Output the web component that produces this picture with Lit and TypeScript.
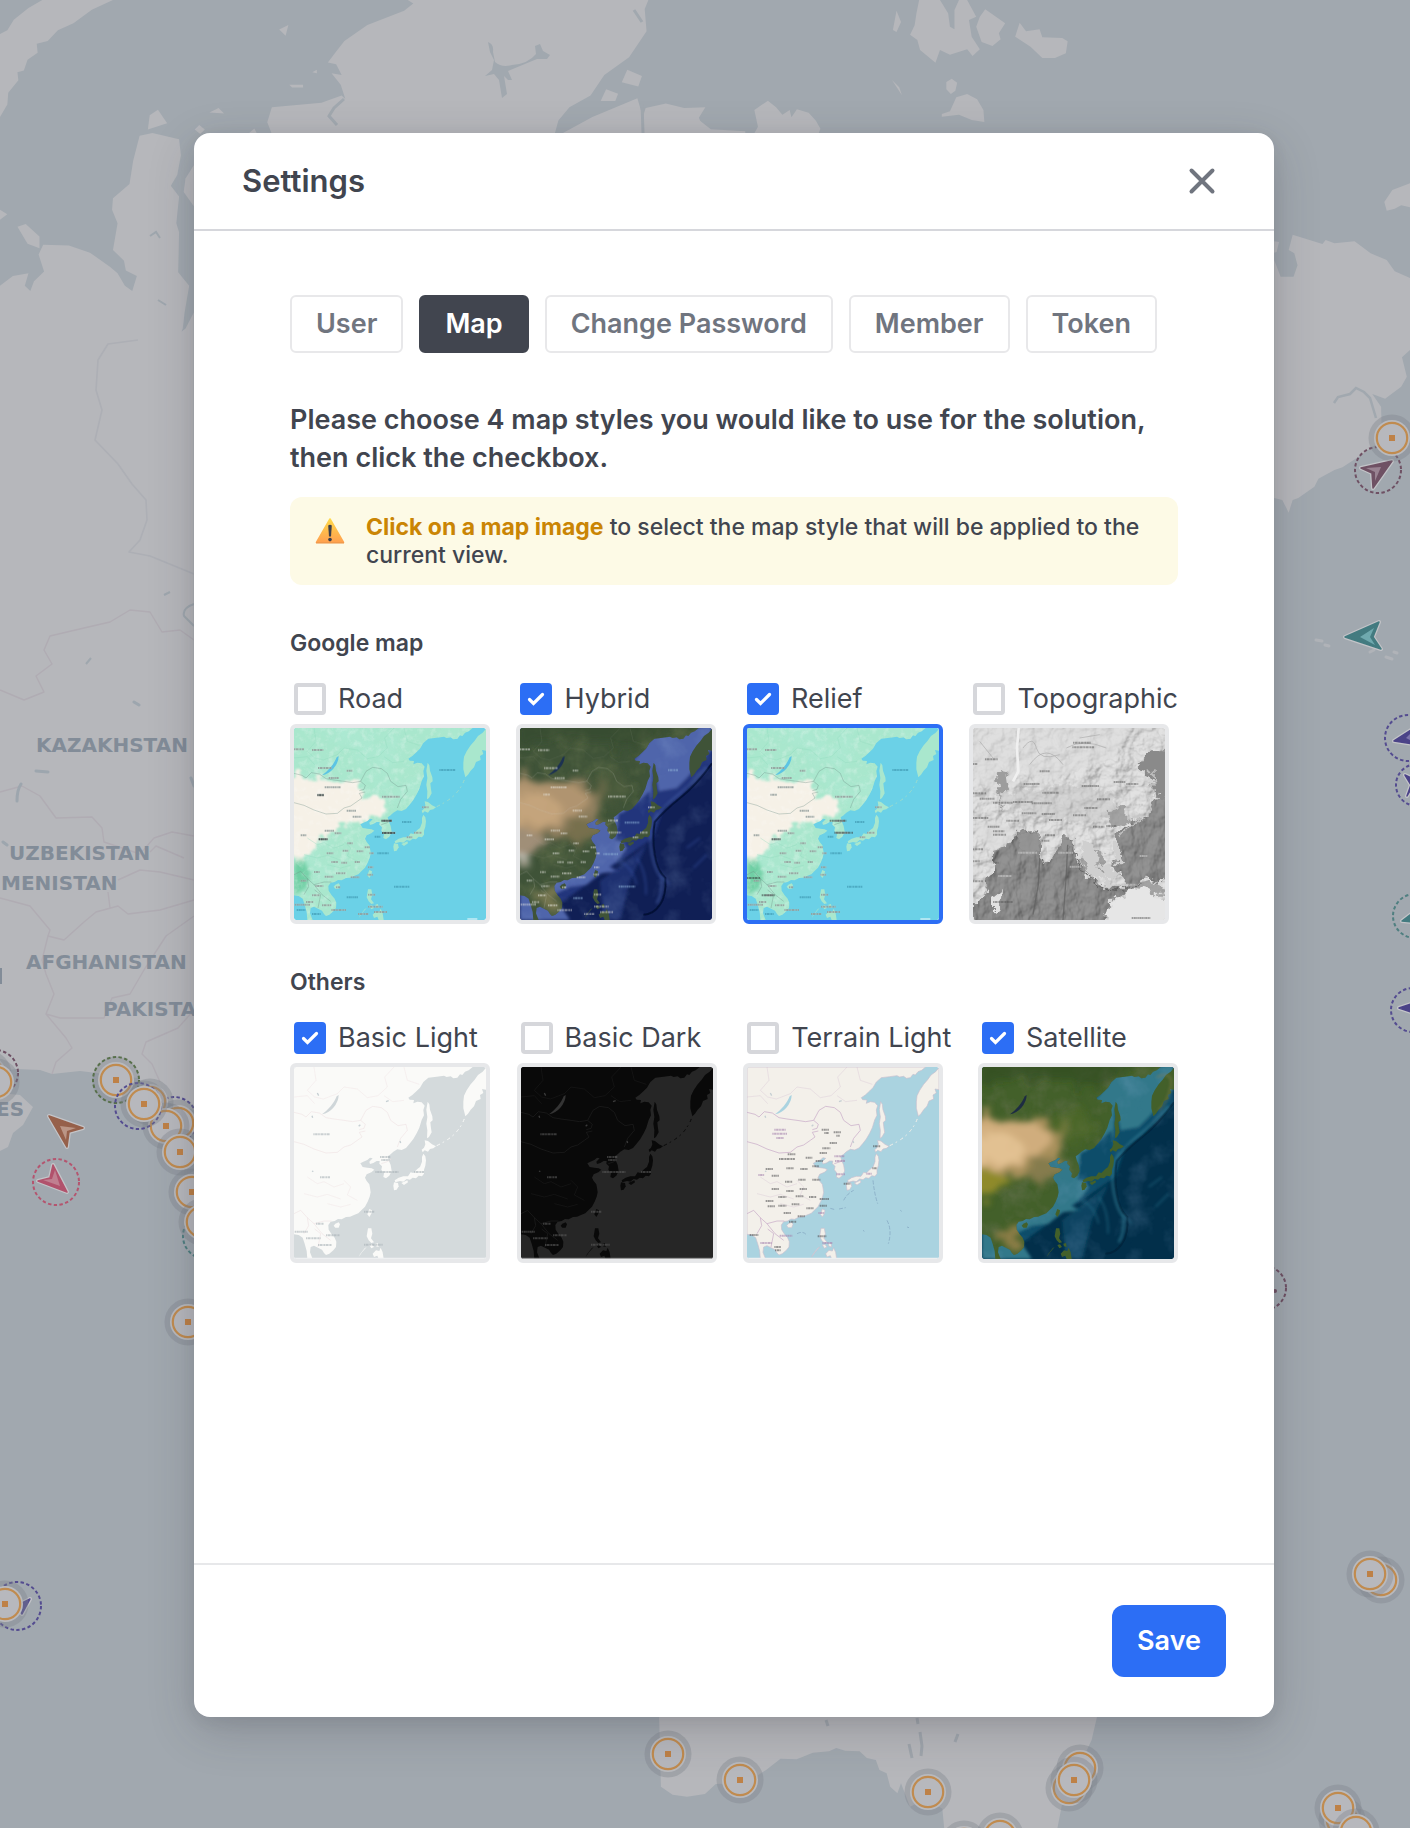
import { LitElement, html, svg, css, nothing } from "lit";
import { customElement, property, state } from "lit/decorators.js";
import { classMap } from "lit/directives/class-map.js";

type StyleId = "road" | "hybrid" | "relief" | "topographic" | "light" | "dark" | "terrain" | "satellite";

interface MapStyle {
  id: StyleId;
  label: string;
}

const GOOGLE: MapStyle[] = [
  { id: "road", label: "Road" },
  { id: "hybrid", label: "Hybrid" },
  { id: "relief", label: "Relief" },
  { id: "topographic", label: "Topographic" },
];

const OTHERS: MapStyle[] = [
  { id: "light", label: "Basic Light" },
  { id: "dark", label: "Basic Dark" },
  { id: "terrain", label: "Terrain Light" },
  { id: "satellite", label: "Satellite" },
];

const TABS = ["User", "Map", "Change Password", "Member", "Token"];

/* East Asia outline on a 576 x 576 tile. */
const MAINLAND =
  "M0 0H536L524 10 513 14 505 24 498 22 490 32 478 34 470 28 458 30 450 26 428 29 403 32 388 45 378 62 368 72 355 84 343 92 347 98 360 99 358 109 370 104 383 106 392 116 388 129 390 145 383 159 376 182 368 199 358 216 348 229 336 243 323 249 310 247 298 254 290 262 281 268 284 280 290 294 293 312 286 326 276 334 268 330 270 319 262 308 264 298 256 290 257 282 248 282 238 288 228 291 226 284 236 274 228 272 220 279 208 284 199 289 206 300 220 302 233 304 241 308 232 316 218 322 213 332 218 342 226 352 228 362 230 376 227 389 221 404 213 419 202 430 193 439 180 444 168 449 156 450 143 457 132 456 122 462 110 464 103 474 104 488 113 502 122 512 127 524 126 540 118 550 106 560 96 564 90 558 84 548 72 542 60 536 50 540 48 556 56 576H40L38 552 32 530 26 512 14 504 0 502Z";
const ISLANDS = [
  "M401 104L406 112 408 128 415 148 416 160 409 166 411 184 413 196 405 210 399 214 400 190 397 170 400 150 397 128Z",
  "M392 220L402 222 414 232 426 238 418 244 408 246 402 254 392 250 386 256 383 248 390 242 394 232Z",
  "M388 260L394 268 396 280 394 296 390 308 390 320 384 328 374 326 366 334 356 332 348 338 338 336 328 344 318 342 304 346 302 340 314 332 328 328 342 328 350 316 358 318 370 306 378 300 384 284 384 270Z",
  "M300 346L312 348 314 358 308 368 300 370 298 356Z",
  "M322 348L340 340 342 346 330 354Z",
  "M576 2L566 14 552 24 542 38 530 52 518 70 510 86 508 104 508 124 514 148 522 140 530 128 540 118 546 102 560 96 558 84 568 78 564 66 576 68Z",
  "M226 426L234 430 232 440 226 450 220 442Z",
  "M124 470L134 466 138 472 134 482 124 482 119 476Z",
  "M222 484L232 484 235 500 231 514 240 526 232 528 224 520 218 508Z",
  "M226 534L234 532 240 540 232 544ZM244 530L252 528 254 540 246 538Z",
  "M236 560L246 550 256 552 260 542 266 556 269 576H254L250 566 240 570Z",
  "M218 540L204 556 194 570 198 562 212 544Z",
];
const BAIKAL = "M134 84Q134 104 118 122 104 138 84 142 98 132 110 118 124 100 128 88Z";
const BORDERS =
  "M0 136L24 142 36 150 52 134 76 138 96 152 120 156 150 160 176 164 200 160 214 172 210 184 196 188M0 224L30 232 60 246 96 258 130 256 150 240 170 234 190 220 204 210 196 196 214 192M200 160L216 130 236 118 262 122 280 136 290 160 312 176 336 172 340 190 320 214 310 240M262 290L280 284 292 276M0 440L20 430 40 452 60 470 90 462 112 462M40 452L44 476 30 500M60 470L84 500 110 520M72 540L80 500 62 486";
const RIVERS =
  "M60 0L66 40 40 70 62 90 88 96 130 80 150 60 190 66 220 92 252 86 280 60 272 30 300 0M330 0L340 40 376 52M0 90L40 86 62 110M150 340L170 360 160 384 190 400M40 330L70 350 90 344 120 360 150 350M30 380L70 390 100 382 140 396M100 410L140 420 170 412M270 86L296 104 330 100";

/* Tiny place-name ticks: x, y, width. */
const TICKS: number[][] = [
  [0, 64, 30], [54, 66, 34], [72, 120, 42], [158, 128, 18], [104, 150, 30], [92, 178, 48], [70, 200, 20],
  [158, 248, 28], [264, 206, 54], [176, 266, 26], [264, 278, 30], [266, 314, 38], [384, 238, 20], [360, 314, 24],
  [338, 328, 18], [92, 308, 28], [20, 322, 18], [74, 334, 28], [122, 316, 20], [160, 346, 16], [98, 376, 20],
  [146, 368, 18], [188, 370, 20], [112, 402, 20], [142, 404, 18], [182, 402, 16], [212, 358, 16], [226, 376, 14],
  [60, 432, 18], [92, 446, 26], [126, 436, 28], [170, 448, 26], [222, 418, 16], [220, 440, 18], [126, 478, 14],
  [20, 458, 18], [64, 474, 24], [54, 502, 24], [36, 522, 22], [84, 532, 28], [112, 546, 44], [2, 530, 46],
  [222, 500, 22], [222, 536, 44], [192, 558, 32], [240, 552, 40],
];
const CHINA_TICKS: number[][] = [
  [224, 188, 22], [232, 198, 14], [260, 196, 22], [268, 206, 10], [248, 228, 22], [226, 244, 24], [218, 258, 22],
  [122, 262, 24], [96, 276, 48], [176, 272, 20], [206, 282, 22], [56, 306, 22], [118, 304, 22], [160, 306, 22],
  [196, 298, 20], [74, 326, 22], [114, 344, 22], [154, 338, 22], [196, 338, 24], [74, 366, 22], [118, 372, 22],
  [158, 366, 22], [94, 390, 24], [146, 388, 24], [186, 390, 22], [56, 402, 24], [62, 418, 22], [94, 416, 24],
  [134, 412, 24], [178, 424, 22], [218, 396, 28], [218, 416, 22], [110, 438, 22], [126, 464, 22], [152, 448, 22],
  [378, 238, 22], [290, 350, 20], [376, 304, 14], [8, 504, 26], [82, 540, 20], [84, 550, 18], [212, 508, 26],
];

const ticks = (list: number[][], color: string, opacity = 0.75) => svg`
  <g stroke=${color} stroke-width="6" stroke-dasharray="4 1.4 7 1.2 3 1" opacity=${opacity}>
    ${list.map(([x, y, w]) => svg`<path d=${`M${x} ${y}h${w}`} />`)}
  </g>`;

const land = (fill: string, stroke = "none") => svg`
  <g fill=${fill} stroke=${stroke} stroke-width="2" stroke-linejoin="round">
    <path d=${MAINLAND} />
    ${ISLANDS.map((d) => svg`<path d=${d} />`)}
  </g>`;

const kurils = (color: string) => svg`
  <path d="M428 236Q470 216 488 194T512 152" fill="none" stroke=${color} stroke-width="3" stroke-dasharray="10 9 5 12" />`;

const grain = (id: string, freq: number, tone: string) => svg`
  <filter id=${id} x="0" y="0" width="100%" height="100%">
    <feTurbulence type="fractalNoise" baseFrequency=${freq} numOctaves="4" seed="7" result="n" />
    <feColorMatrix in="n" type="matrix" values=${tone} />
    <feComposite in2="SourceGraphic" operator="in" />
  </filter>`;

/* Frays straight edges so that drawn regions look natural. */
const ragged = (id: string, scale: number, blur: number) => svg`
  <filter id=${id} x="-20%" y="-20%" width="140%" height="140%">
    <feTurbulence type="fractalNoise" baseFrequency=".03" numOctaves="4" seed="3" result="n" />
    <feDisplacementMap in="SourceGraphic" in2="n" scale=${scale} xChannelSelector="R" yChannelSelector="G" />
    <feGaussianBlur stdDeviation=${blur} />
  </filter>`;

function colourTile(id: string, names: boolean) {
  return svg`
    <defs>
      ${grain(id + "-g", 0.009, "0 0 0 0 0.42  0 0 0 0 0.82  0 0 0 0 0.66  0 3 0 0 -1.3")}
      ${grain(id + "-f", 0.05, "0 0 0 0 1  0 0 0 0 1  0 0 0 0 1  0 2.6 0 0 -1.2")}
      ${ragged(id + "-r", 60, 3)}
      <filter id=${id + "-b"}><feGaussianBlur stdDeviation="7" /></filter>
      <clipPath id=${id + "-c"}><path d=${MAINLAND} /></clipPath>
    </defs>
    <rect width="576" height="576" fill="#6bd1e7" />
    ${land("#a9e7cd")}
    <path d=${MAINLAND} filter=${`url(#${id}-g)`} opacity=".7" />
    <g clip-path=${`url(#${id}-c)`}>
      <path d="M-30 138L50 150 110 152 180 160 214 180 210 210 250 206 282 230 262 262 220 262 190 290 150 300 130 296 100 330 60 350 50 380 20 396 -30 380Z" fill="#f6f1e7" filter=${`url(#${id}-r)`} />
      <path d="M0 400L30 396 50 440 36 480 0 500Z" fill="#6fcfa4" filter=${`url(#${id}-b)`} />
    </g>
    <path d=${MAINLAND} filter=${`url(#${id}-f)`} opacity=".25" />
    <path d=${BAIKAL} fill="#5cc4e4" />
    <path d=${RIVERS} fill="none" stroke="#8fd9be" stroke-width="1.5" opacity=".7" />
    <path d=${BORDERS} fill="none" stroke="#6f8f86" stroke-width="1.8" opacity=".6" />
    ${kurils("#9fdccb")}
    ${ticks(TICKS, "#fff", 0.6)}
    ${ticks(TICKS, "#5d6d6a", 0.55)}
    ${ticks([[436, 126, 48], [324, 282, 28], [242, 326, 18], [250, 376, 34], [300, 476, 46], [158, 508, 34], [54, 558, 26], [8, 546, 26]], "#3a93ac", 0.6)}
    ${names ? ticks([[74, 334, 26], [262, 314, 56], [248, 278, 50], [0, 450, 40], [44, 502, 40]], "#3f4a48", 0.6) : ticks([[262, 278, 32], [264, 315, 40], [74, 334, 26], [70, 202, 20]], "#2f3a39", 0.7)}
    <path d="M520 573h30" stroke="#fff" stroke-width="4" opacity=".7" />`;
}

function photoTile(id: string, hybrid: boolean) {
  const shelf = hybrid ? "#4f65ab" : "#32788a";
  const deep = hybrid ? "#101f55" : "#022f4a";
  const mid = hybrid ? "#22367c" : "#0c4d6b";
  return svg`
    <defs>
      ${grain(id + "-g", 0.014, "0 0 0 0 0.12  0 0 0 0 0.16  0 0 0 0 0.07  0 2.4 0 0 -1.05")}
      ${grain(id + "-o", 0.012, "0 0 0 0 0.35  0 0 0 0 0.5  0 0 0 0 0.75  0 2 0 0 -1.0")}
      ${ragged(id + "-r", 80, 9)}
      <filter id=${id + "-s"} x="-30%" y="-30%" width="160%" height="160%"><feGaussianBlur stdDeviation="5" /></filter>
      <filter id=${id + "-t"} x="-30%" y="-30%" width="160%" height="160%"><feGaussianBlur stdDeviation="2" /></filter>
      <clipPath id=${id + "-c"}><path d=${MAINLAND} /></clipPath>
    </defs>
    <rect width="576" height="576" fill=${deep} />
    <g filter=${`url(#${id}-s)`}>
      <path d="M330 60H576V110L520 160 480 205 430 240 400 330 300 400 240 440 130 520 60 576H0V480L200 260Z" fill=${mid} />
      <path d="M340 100L400 20 576 -10V60L500 150 470 180 416 190 400 110 392 240 330 250 296 256 288 330 250 410 300 430 240 436 200 470 120 480 0 500 200 270Z" fill=${shelf} />
      <path d="M230 330L300 340 320 360 290 400 240 436 150 476 100 500 150 576H0V490L120 450Z" fill=${shelf} />
      <path d="M300 260L390 190 392 250 350 300 310 300Z" fill=${mid} />
      <path d="M420 190L490 180 470 206 430 220Z" fill=${mid} />
      <path d="M240 460L380 350 330 460 300 576H250Z" fill=${mid} opacity=".7" />
    </g>
    <rect width="576" height="576" filter=${`url(#${id}-o)`} opacity=".22" />
    <path d="M576 106Q530 170 480 210T404 282Q396 330 404 380T436 450Q440 500 420 530T370 560" fill="none" stroke=${hybrid ? "#060f33" : "#011b30"} stroke-width="6" opacity=${hybrid ? 0.85 : 0.5} filter=${`url(#${id}-t)`} />
    <path d="M560 118Q520 166 476 200T396 282Q386 330 396 380T424 450Q428 500 410 526" fill="none" stroke=${hybrid ? "#4d69b4" : "#3f93a8"} stroke-width="6" opacity=".6" filter=${`url(#${id}-s)`} />
    <path d="M350 390Q380 430 378 500M300 400Q340 420 350 470M420 440L450 470M500 360L540 330M520 420L560 380" fill="none" stroke=${hybrid ? "#3c5bb0" : "#2d7d97"} stroke-width="4" opacity=".55" filter=${`url(#${id}-s)`} />
    ${land(hybrid ? "#3f5338" : "#43602a")}
    <path d=${MAINLAND} filter=${`url(#${id}-g)`} opacity=".7" />
    <g clip-path=${`url(#${id}-c)`}>
      <g filter=${`url(#${id}-r)`}>
        <path d="M-40 -40H520L420 20 330 60 150 30 0 60Z" fill=${hybrid ? "#33492f" : "#2f4a20"} opacity=".6" />
        <path d="M-40 130L60 160 160 150 250 180 240 240 180 300 80 340 -40 330Z" fill=${hybrid ? "#8f7f5e" : "#a8905c"} />
        <path d="M-40 150L60 170 150 166 220 200 200 240 140 280 50 310 -40 300Z" fill=${hybrid ? "#b0946f" : "#d0ad7d"} />
        <path d="M-40 200L70 200 120 230 110 280 40 296 -40 280Z" fill=${hybrid ? "#c4a47c" : "#e2c192"} />
        <path d="M140 280L230 270 250 320 160 350Z" fill=${hybrid ? "#77704e" : "#857b4e"} />
        <path d="M-40 310L60 310 80 340 40 380 -40 390Z" fill=${hybrid ? "#a08f78" : "#8f8a2c"} />
        <path d="M210 150L300 120 340 180 280 240 230 220Z" fill=${hybrid ? "#4c5a3a" : "#4e6b2a"} opacity=".6" />
        <path d="M40 490L110 490 120 540 70 540Z" fill=${hybrid ? "#7d7a52" : "#93804a"} />
        ${hybrid ? svg`<path d="M-40 372L24 390 14 404 -40 396Z" fill="#e7e2dc" opacity=".8" />` : nothing}
      </g>
    </g>
    <path d=${BAIKAL} fill=${hybrid ? "#1c3152" : "#1d2c42"} />
    ${hybrid
      ? svg`<path d=${BORDERS} fill="none" stroke="#cfcfc4" stroke-width="1.5" opacity=".4" />
        <path d=${RIVERS} fill="none" stroke="#b9b9ac" stroke-width="1" opacity=".3" />
        ${ticks(TICKS, "#e9e9e4", 0.5)}
        ${ticks([[444, 126, 30], [314, 284, 44], [250, 378, 44], [296, 476, 50], [160, 510, 28]], "#8fb2d8", 0.6)}`
      : svg`<path d="M524 30Q576 10 566 60T530 130" fill="none" stroke="#8a7e4e" stroke-width="6" opacity=".5" filter=${`url(#${id}-s)`} />`}`;
}

function flatTile(id: StyleId) {
  const dark = id === "dark";
  const terrain = id === "terrain";
  const sea = dark ? "#262626" : terrain ? "#aad3e0" : "#d4dadc";
  const ground = dark ? "#090909" : terrain ? "#f3f0ea" : "#fafaf8";
  const line = dark ? "#252525" : terrain ? "#cdb3cb" : "#eedfe0";
  return svg`
    <rect width="576" height="576" fill=${sea} />
    ${land(ground, terrain ? "#c9bfcf" : "none")}
    <path d=${BAIKAL} fill=${dark ? "#343434" : terrain ? "#aad3e0" : "#cfd6d9"} />
    <path d=${RIVERS} fill="none" stroke=${line} stroke-width="1.4" opacity=${terrain ? 0.6 : 0.8} />
    <path d=${BORDERS} fill="none" stroke=${line} stroke-width=${terrain ? 2.4 : 1.6} />
    <path d="M70 78l4 8M54 146l2 6M276 104l8-3M194 178l5-5M318 222l2 6M54 312l4 2" stroke=${dark ? "#3a3a3a" : "#c6cfd3"} stroke-width="4" />
    ${kurils(ground)}
    ${terrain
      ? svg`${ticks(CHINA_TICKS, "#4d4d4f", 0.55)}
        ${ticks([[82, 188, 34], [76, 200, 44], [88, 213, 22], [262, 268, 30], [264, 282, 30], [268, 322, 26], [358, 320, 16], [34, 324, 18], [214, 438, 18], [98, 506, 38], [226, 528, 30], [40, 528, 34]], "#a583ae", 0.6)}
        <path d="M378 340Q382 380 392 410M420 460Q436 490 424 530M348 490l4 3M460 430l4 3M480 480l6 2M150 500q20-10 30 6M290 400q10-20 30-30M250 424l14 4M276 426l20-4" fill="none" stroke="#86a9c4" stroke-width="2.4" stroke-dasharray="12 5" />`
      : ticks([[58, 202, 50], [78, 331, 30], [258, 270, 32], [262, 279, 24], [244, 315, 70], [360, 315, 30], [66, 470, 24], [36, 514, 44], [72, 534, 42], [96, 505, 42], [2, 494, 40], [210, 533, 56], [210, 434, 32]], dark ? "#5a5a5a" : "#aab3b8", 0.6)}
    ${dark ? nothing : svg`<path d="M0 574H576" stroke="#eef0f1" stroke-width="4" />`}
    ${dark ? svg`<path d="M0 573H576" stroke="#5e6062" stroke-width="2" /><path d="M0 575.5H576" stroke="#c9cacb" stroke-width="3" />` : nothing}`;
}

function greyTile() {
  return svg`
    <defs>
      <filter id="topo-land" x="0" y="0" width="100%" height="100%">
        <feTurbulence type="fractalNoise" baseFrequency=".022" numOctaves="5" seed="4" result="n" />
        <feDiffuseLighting in="n" surfaceScale="13" diffuseConstant="1.08" lighting-color="#dedede">
          <feDistantLight azimuth="225" elevation="62" />
        </feDiffuseLighting>
      </filter>
      <filter id="topo-sea" x="-10%" y="-10%" width="120%" height="120%">
        <feTurbulence type="fractalNoise" baseFrequency=".03" numOctaves="4" seed="9" result="m" />
        <feDisplacementMap in="SourceGraphic" in2="m" scale="46" xChannelSelector="R" yChannelSelector="G" result="shape" />
        <feTurbulence type="fractalNoise" baseFrequency=".02 .012" numOctaves="4" seed="11" result="n" />
        <feDiffuseLighting in="n" surfaceScale="14" diffuseConstant="1.08" lighting-color="#8e8e8e" result="l">
          <feDistantLight azimuth="225" elevation="60" />
        </feDiffuseLighting>
        <feComposite in="l" in2="shape" operator="in" />
      </filter>
      ${ragged("topo-r", 46, 1.5)}
      <filter id="topo-soft"><feGaussianBlur stdDeviation="3" /></filter>
      <clipPath id="topo-c"><rect width="576" height="576" /></clipPath>
    </defs>
    <g clip-path="url(#topo-c)">
      <rect width="576" height="576" fill="#d2d2d2" />
      <rect width="576" height="576" filter="url(#topo-land)" opacity=".85" />
      <path d="M0 0H130V170L60 190 0 150ZM140 0H480L420 90 300 130 200 170 140 120Z" fill="#dedede" opacity=".6" filter="url(#topo-soft)" />
      <path d="M137 0L132 60 136 130 120 160" fill="none" stroke="#f0f0f0" stroke-width="8" />
      <path d="M68 140L100 130 106 170 90 200 96 240 80 210Z" fill="#9d9d9d" filter="url(#topo-r)" />
      <path d="M200 180L330 170 420 200 440 260 330 290 210 270 100 230 60 200Z" fill="#c2c2c2" opacity=".4" filter="url(#topo-r)" />
      <path d="M60 372L100 346 134 308 198 316 204 366 214 396 226 406 240 380 250 350 270 330 296 334 306 370 322 410 346 450 390 476 470 476 440 440 420 420 440 372 420 330 440 312 480 280 520 262 536 240 536 210 610 190V470L520 452 470 480 440 500 400 540 404 620H0V520L40 496 46 460 60 440Z" filter="url(#topo-sea)" />
      <path d="M130 310L198 318 200 370 150 376ZM270 332L300 340 306 366 262 360ZM320 400L376 360 400 400 390 450 350 440ZM410 240L460 236 460 280 420 300ZM450 480L520 460 580 480 580 500 500 500Z" fill="#969696" opacity=".8" filter="url(#topo-r)" />
      <path d="M536 70H610V190L546 210 530 150 500 110Z" fill="#8a8a8a" filter="url(#topo-r)" />
      <path d="M536 130L540 200 530 240 470 290 440 320" fill="none" stroke="#c9c9c9" stroke-width="6" opacity=".8" filter="url(#topo-r)" />
      <path d="M284 350L280 440 270 576M200 390L196 470 180 560" fill="none" stroke="#606060" stroke-width="4" opacity=".7" />
      <path d="M306 370Q330 450 380 476T500 470" fill="none" stroke="#5a5a5a" stroke-width="4" opacity=".8" filter="url(#topo-r)" />
      <path d="M322 340L360 346 372 390 384 440 430 470 400 470 350 440ZM420 340L440 360 450 400 420 400ZM380 420L420 410 440 450 400 450Z" fill="#cfcfcf" filter="url(#topo-r)" />
      <path d="M400 546L420 520 450 500 480 484 510 490 530 500 560 514 620 510V620H404Z" fill="#e6e6e6" filter="url(#topo-r)" />
      <path d="M0 300L60 372 80 360 130 312 100 290 60 280Z" fill="#dedede" opacity=".7" filter="url(#topo-soft)" />
      <path d="M60 510L84 490 76 550 60 556Z" fill="#e2e2e2" filter="url(#topo-r)" />
      <path d="M150 60Q180 20 190 60T260 80M170 110Q220 40 270 110M20 40L60 90M280 60Q330 30 400 60M320 30L380 20" fill="none" stroke="#aaa" stroke-width="2" />
      ${ticks([[300, 44, 54], [298, 58, 66], [36, 94, 38], [0, 108, 14], [200, 130, 30], [152, 168, 48], [326, 174, 52], [422, 162, 36], [460, 168, 36], [0, 196, 40], [20, 212, 44], [60, 224, 60], [120, 222, 60], [176, 226, 60], [208, 194, 50], [372, 214, 40], [0, 270, 46], [44, 296, 36], [60, 310, 34], [60, 320, 40], [100, 278, 38], [146, 256, 44], [206, 258, 40], [228, 276, 40], [300, 262, 40], [334, 240, 40], [360, 296, 34], [400, 294, 30], [216, 322, 30], [206, 338, 24], [60, 404, 18], [0, 364, 30], [0, 400, 20], [0, 460, 30], [60, 522, 60], [476, 570, 56]], "#555", 0.5)}
      ${ticks([[136, 374, 56], [256, 374, 44], [290, 416, 34], [76, 444, 40], [430, 470, 60], [500, 384, 24], [480, 230, 30]], "#c4c4c4", 0.7)}
    </g>`;
}

function tile(id: StyleId) {
  switch (id) {
    case "road":
      return colourTile("road", false);
    case "relief":
      return colourTile("relief", true);
    case "hybrid":
      return photoTile("hybrid", true);
    case "satellite":
      return photoTile("satellite", false);
    case "topographic":
      return greyTile();
    default:
      return flatTile(id);
  }
}

/* Live map that lies dimmed behind the dialog. */
@customElement("map-backdrop")
export class MapBackdrop extends LitElement {
  static styles = css`
    :host { display: block; }
    .map { display: block; width: 100%; height: 100%; }
    .country { font: 700 20px "DejaVu Sans", Inter, sans-serif; fill: #828c98; }
  `;

  private port(x: number, y: number) {
    return svg`<g transform=${`translate(${x} ${y})`}>
      <circle r="23.5" fill="#7c838b" opacity=".36" />
      <circle r="18" fill="#b9babe" />
      <circle r="15.2" fill="#b7b8bd" stroke="#c08b4f" stroke-width="2.2" />
      <rect x="-3" y="-3" width="6" height="6" fill="#be8147" />
    </g>`;
  }

  private ring(x: number, y: number, color: string, r = 23) {
    return svg`<circle cx=${x} cy=${y} r=${r} fill="none" stroke=${color} stroke-width="2" stroke-dasharray="3.4 2.4" />`;
  }

  private ship(points: string, color: string, inner = "", tint = "") {
    return svg`
      <polygon points=${points} fill=${color} stroke="#c3c4c8" stroke-width="4" stroke-linejoin="round" />
      <polygon points=${points} fill=${color} stroke=${color} stroke-width="1.5" stroke-linejoin="round" />
      ${inner ? svg`<polygon points=${inner} fill=${tint} />` : nothing}`;
  }

  render() {
    const purple = "#544c90";
    return html`<svg class="map" viewBox="0 0 1410 1828" preserveAspectRatio="xMidYMid slice" aria-hidden="true">
      <rect width="1410" height="1828" fill="#a1a8af" />
      <g fill="#b6b7bb">
        <g transform="scale(.4592 .4464)">
          <path d="M0 76L16 68 30 44 62 18 92 0H246L200 22 160 52 126 68 104 92 80 98 82 118 60 134 52 158 38 162 40 180 18 208 16 234 0 262Z" />
          <path d="M0 640L28 618 62 612 54 640 66 652 74 630 96 608 84 570 94 548 150 550 196 566 240 598 256 612 272 640 288 652 298 618 274 606 270 584 246 560 256 500 244 470 246 444 282 412 290 360 304 304 332 298 390 312 394 348 386 392 372 416 390 440 384 500 390 520 388 610 412 640 402 700 398 736 378 790 350 782 326 784 304 770 312 756 340 764 372 762 404 736 422 700V2100H0Z" />
          <path d="M422 370L404 400 400 430 422 462Z" />
          <path d="M322 290L326 258 344 246 364 276Z" />
          <path d="M0 470L16 480 0 492ZM38 508L56 502 86 530 86 556 60 546Z" />
          <path d="M592 300L582 274 592 240 640 236 700 230 744 214 752 222 742 190 722 164 744 168 732 144 714 140 730 118 750 92 800 56 880 24 900 8 888 0H1412L1404 20 1408 70 1370 128 1316 168 1286 214 1240 240 1216 270 1208 300Z" />
          <path d="M1222 300L1290 262 1388 220 1400 262 1406 242 1450 232 1490 242 1536 240 1522 264 1532 288 1568 300Z" />
          <path d="M1308 226L1320 200 1346 210 1340 226ZM1354 184L1366 156 1398 170 1390 194Z" />
          <path d="M608 66L628 56 622 80ZM680 162l10-6v8ZM630 190l30 0v6h-24ZM456 252l20-10 12 12ZM424 290l10-10 12 10-10 10ZM540 300l14-12 6 12Z" />
        </g>
        <g transform="translate(700) scale(.4528 .3333)">
          <path d="M484 0L478 40 474 76 464 104 480 120 486 150 520 188 530 150 552 164 590 148 602 168 618 148 600 110 594 60 610 50 590 0 572 0 562 30 562 88 552 80 548 40 530 0Z" />
          <path d="M610 80L618 50 630 28 674 70 660 100 664 118 646 138 622 126Z" />
          <path d="M696 110L706 68 720 94 750 88 756 112 800 114 812 124 808 160 784 174 756 174 730 140Z" />
          <path d="M434 32L444 66 434 96 426 90ZM544 246L556 236 568 248 564 272 554 282 544 268ZM424 240L440 262 446 286Z" />
          <path d="M534 342L552 334 566 292 590 282 612 298 626 330 628 366 600 360 572 344 534 350Z" />
          <path d="M120 400L128 380 120 330 150 302 168 322 182 344 198 330 202 352 214 328 240 338 256 362 266 386 262 400Z" />
          <path d="M0 362L24 388 100 394V400H0Z" />
        </g>
        <g transform="translate(780 120) scale(.4018 .3333)">
          <path d="M1230 420L1246 470 1278 470 1288 436 1280 400 1266 390 1276 344 1350 372 1358 360 1380 370 1430 364 1470 400 1510 420 1530 454 1568 474V690L1548 712 1560 770 1546 800 1506 836 1474 822 1496 860 1498 960 1440 1010 1400 1042 1380 1050 1340 1076 1330 1100 1290 1134 1276 1140 1266 1178 1250 1140 1230 1134Z" />
          <path d="M1230 364L1242 366 1236 396 1230 398ZM1510 272L1504 246 1524 210 1568 190V262L1546 256 1530 266Z" />
        </g>
        <path d="M0 1071L16 1069 40 1070 52 1074 80 1071 138 1078 156 1100 194 1110V900H0Z" />
        <path d="M0 1093L20 1095 33 1107 23 1125 13 1133 8 1147 0 1151Z" />
        <g transform="translate(0 1540) scale(.8992 .3333)">
          <path d="M733 530L735 740 748 764 764 770 784 762 796 732 830 728 852 690 868 656 886 658 904 638 922 634 930 624 940 632 956 634 964 654 974 660 978 690 986 700 990 740 998 760 1002 730 1012 800 1030 776 1048 806 1050 864H1176L1182 780 1200 680 1214 600 1220 530Z" />
        </g>
      </g>
      <path d="M488 42Q494 44 493 52L495 62Q502 68 512 65 528 64 536 54L535 46 540 44 543 51 550 55 547 59 537 59 520 66 508 71 512 80 508 80 504 76 507 94 502 98 499 80 494 74 485 76 492 70 494 60 490 52Z" fill="#a1a8af" />
      <g fill="none" stroke="#a1a8af" stroke-width="3">
        <path d="M344 99L334 108 329 116 337 125M634 10L642 22M642 103L643 133" />
      </g>
      <path d="M916 1720l2 6M1007 1718l1 6M1010 1732l2 14-1 10M999 1744l3 14M1048 1734l-3 8" transform="translate(-90 0)" fill="none" stroke="#9fa5ac" stroke-width="3" />
      <path d="M1334 403L1338 397 1350 394 1356 388 1364 392 1370 398 1376 418" fill="none" stroke="#a1a8af" stroke-width="2.5" />
      <path d="M150 236l6-4 4 6M158 300l8 5M170 592l-6 3M194 604q-12 4-10 12l10 10M86 664l5-6" fill="none" stroke="#9fa7ae" stroke-width="2" />
      <g fill="none" stroke="#adafb5" stroke-width="1.6" stroke-linejoin="round">
        <path d="M138 340L108 344 98 360 96 390 102 410 95 440 118 464 132 484 146 500 147 520 140 540 129 552 150 556 194 574" />
      </g>
      <g fill="none" stroke="#b0acb3" stroke-width="1.4" stroke-linejoin="round">
        <path d="M0 690L24 700 44 692 36 676 52 664 44 650 50 636 84 628 110 622 130 610 150 612 162 632 180 630 194 640" />
        <path d="M0 792L22 786 40 796 56 818 92 817 102 828 104 842 140 854 154 838 172 832 194 836M0 898L30 906 50 930 48 936 64 940 84 922 96 912 118 906 128 914 160 910 194 900M48 936L42 960 46 974 54 994 46 1014 66 1038 72 1048 56 1062 52 1074M46 1014L60 1018 104 1018 112 998 130 994 144 970 166 936 194 916M194 1010L178 1028 146 1042 142 1054 152 1064 160 1082M108 892L110 908M118 880L140 870 160 872 194 880M150 852L156 846 184 858" />
      </g>
      <path d="M36 771l12 1M17 801Q17 790 21 784M3 842l4 3M191 778l3 8M134 702l5 3" fill="none" stroke="#9da6ae" stroke-width="3" stroke-linecap="round" />
      <text class="country" x="36" y="752">KAZAKHSTAN</text>
      <text class="country" x="9" y="860">UZBEKISTAN</text>
      <text class="country" x="1" y="890">MENISTAN</text>
      <text class="country" x="26" y="969">AFGHANISTAN</text>
      <text class="country" x="103" y="1016">PAKISTAN</text>
      <text class="country" x="-4" y="1116">ES</text>
      <path d="M0 968v16" stroke="#828c98" stroke-width="4" />
      <path d="M1316 640l6 1M1325 645l4 1M1370 652l4-2M1386 657l6 2M1394 652l3 1" stroke="#b0b3b8" stroke-width="3" stroke-linecap="round" />

      ${this.ring(-5, 1073, "#6d4f63")} ${this.port(-12, 1074)} ${this.port(-4, 1082)}
      ${this.port(116, 1080)} ${this.ring(116, 1080, "#58704b")}
      ${this.ring(174, 1120, purple)} ${this.port(178, 1123)} ${this.port(150, 1102)} ${this.port(166, 1126)}
      ${this.ring(138, 1106, purple)} ${this.port(144, 1104)}
      ${this.port(180, 1152)} ${this.port(192, 1192)} ${this.ring(206, 1236, "#4f7f80")} ${this.port(202, 1222)}
      ${this.port(188, 1322)}
      ${this.ring(17, 1606, purple, 24)} ${this.ship("16,1606 30,1599 22,1614", purple)} ${this.port(5, 1604)}
      ${this.ring(56, 1182, "#b4556f")}
      ${this.ship("67,1192 38,1181 50,1178 53,1165", "#b1526c", "60,1186 43,1180 52,1179 55,1170", "#c07f90")}
      ${this.ship("49,1116 83,1128 69,1132 67,1147", "#96604a", "60,1126 76,1128 67,1131 66,1140", "#bb9686")}
      ${this.ring(1378, 470, "#6f5164")}
      ${this.ship("1392,461 1361,468 1372,473 1373,488", "#6f5164", "1381,467 1366,468 1375,472 1375,481", "#998392")}
      ${this.port(1392, 438)}
      ${this.ship("1345,637 1379,622 1373,637 1381,649", "#437b80", "1360,637 1374,628 1370,637 1375,645", "#6fa9ae")}
      ${this.ring(1408, 738, purple)} ${this.ship("1394,741 1414,728 1414,744", "#4b4388", "1406,738 1412,732 1412,741", "#7d74ab")}
      ${this.ring(1417, 785, purple, 21)} ${this.ship("1405,775 1416,780 1407,796 1411,785", "#4b4388")}
      ${this.ring(1415, 916, "#4f7f80", 22)} ${this.ship("1402,921 1414,912 1414,922", "#437b80")}
      ${this.ring(1413, 1010, purple, 22)} ${this.ship("1399,1008 1414,1003 1414,1013", "#4b4388")}
      ${this.ring(1264, 1288, "#6f5164", 22)} <circle cx="1275" cy="1291" r="2" fill="#6f5164" />
      ${this.port(1381, 1580)} ${this.port(1370, 1574)}
      ${this.port(668, 1754)} ${this.port(740, 1780)} ${this.port(928, 1792)}
      ${this.port(1080, 1768)} ${this.port(1069, 1788)} ${this.port(1074, 1780)}
      ${this.port(964, 1844)} ${this.port(1000, 1836)}
      ${this.port(1342, 1820)} ${this.port(1338, 1808)} ${this.port(1356, 1832)}
    </svg>`;
  }
}

/* One selectable map style: tick box with its label above a preview image. */
@customElement("map-option")
export class MapOption extends LitElement {
  @property() styleId: StyleId = "road";
  @property() label = "";
  @property({ type: Boolean }) checked = false;
  @property({ type: Boolean }) current = false;

  static styles = css`
    :host { display: block; }
    .option { display: flex; flex-direction: column; align-items: flex-start; gap: 7px; }
    .pick { display: flex; align-items: center; gap: 12px; height: 36px; padding-left: 4px; font-size: 27px; line-height: 36px; white-space: nowrap; cursor: pointer; }
    .tick { display: grid; width: 32px; height: 32px; }
    .box { grid-area: 1 / 1; appearance: none; box-sizing: border-box; width: 32px; height: 32px; margin: 0; border: 4px solid #d6d7db; border-radius: 4px; background: #fff; cursor: pointer; }
    .box:checked { border-color: #2c6ef5; background: #2c6ef5; }
    .mark { grid-area: 1 / 1; width: 32px; height: 32px; pointer-events: none; }
    .preview { display: block; box-sizing: border-box; width: 200px; height: 200px; padding: 0; border: 4px solid #e7e8ea; border-radius: 6px; background: none; overflow: hidden; cursor: pointer; }
    .preview.current { border-color: #2c6ef5; }
    .tile { display: block; width: 192px; height: 192px; border-radius: 2px; }
  `;

  private onToggle(e: Event) {
    this.dispatchEvent(new CustomEvent("pick", { detail: (e.target as HTMLInputElement).checked }));
  }

  render() {
    return html`<div class="option">
      <label class="pick">
        <span class="tick">
          <input class="box" type="checkbox" .checked=${this.checked} @change=${this.onToggle} />
          ${this.checked
            ? html`<svg class="mark" viewBox="0 0 32 32" aria-hidden="true">
                <path d="M9.5 16.5L13.5 20.5L22.5 11.5" fill="none" stroke="#fff" stroke-width="3.2" stroke-linecap="round" stroke-linejoin="miter" />
              </svg>`
            : nothing}
        </span>
        ${this.label}
      </label>
      <button
        type="button"
        class=${classMap({ preview: true, current: this.current })}
        aria-label=${this.label}
        aria-pressed=${this.current ? "true" : "false"}
        @click=${() => this.dispatchEvent(new CustomEvent("apply"))}
      >
        <svg class="tile" viewBox="0 0 576 576" aria-hidden="true">${tile(this.styleId)}</svg>
      </button>
    </div>`;
  }
}

@customElement("app-root")
export class AppRoot extends LitElement {
  @state() private tab = "Map";
  @state() private chosen = new Set<StyleId>(["hybrid", "relief", "light", "satellite"]);
  @state() private current: StyleId = "relief";

  static styles = css`
    :host { display: block; font-family: Inter, "Liberation Sans", sans-serif; color: #41454f; }
    .page { position: relative; display: flex; box-sizing: border-box; min-height: 100vh; padding: 133px 136px 111px 194px; overflow: hidden; }
    .backdrop { position: absolute; inset: 0; }
    .dialog { position: relative; flex: 1; display: flex; flex-direction: column; min-width: 0; background: #fff; border-radius: 16px; box-shadow: 0 14px 48px rgba(40, 40, 52, 0.2), 0 4px 16px rgba(40, 40, 52, 0.08); }
    .head { display: flex; align-items: center; justify-content: space-between; padding: 24px 48px; border-bottom: 2px solid #d6d7dc; }
    .title { margin: 0; font-size: 31px; line-height: 40px; font-weight: 600; }
    .close { display: block; width: 48px; height: 48px; padding: 0; border: 0; background: none; cursor: pointer; }
    .cross { display: block; width: 48px; height: 48px; }
    .body { flex: 1; padding: 64px 96px; }
    .tabs { display: flex; flex-wrap: wrap; gap: 16px; }
    .tab { box-sizing: border-box; height: 58px; padding: 0 24px; border: 2px solid #e8e8ea; border-radius: 6px; background: #fff; color: #70757f; font: 600 27px/36px Inter, "Liberation Sans", sans-serif; cursor: pointer; }
    .tab.active { border-color: #41454f; background: #41454f; color: #fff; }
    .lead { margin: 48px 0 20px; font-size: 27px; line-height: 38px; font-weight: 600; }
    .notice { display: flex; gap: 20px; padding: 16px 24px; border-radius: 12px; background: #fdfae6; font-size: 23px; line-height: 28px; font-weight: 500; }
    .warn { flex: none; width: 32px; height: 32px; }
    .notice-text { margin: 0; }
    .accent { font-weight: 700; color: #ca8504; }
    .group-name { margin: 44px 0 24px; font-size: 23px; line-height: 28px; font-weight: 600; }
    .options { display: flex; flex-wrap: wrap; justify-content: space-between; }
    .foot { display: flex; justify-content: flex-end; padding: 40px 48px; border-top: 2px solid #e7e8ea; }
    .save { height: 72px; padding: 0 25px; border: 0; border-radius: 12px; background: #2c6ef5; color: #fff; font: 600 27px/36px Inter, "Liberation Sans", sans-serif; cursor: pointer; }
  `;

  private toggle(id: StyleId, on: boolean) {
    const next = new Set(this.chosen);
    if (on) next.add(id);
    else next.delete(id);
    this.chosen = next;
  }

  private group(name: string, list: MapStyle[]) {
    return html`<section>
      <h3 class="group-name">${name}</h3>
      <div class="options">
        ${list.map(
          (s) => html`<map-option
            .styleId=${s.id}
            .label=${s.label}
            .checked=${this.chosen.has(s.id)}
            .current=${this.current === s.id}
            @pick=${(e: CustomEvent<boolean>) => this.toggle(s.id, e.detail)}
            @apply=${() => (this.current = s.id)}
          ></map-option>`,
        )}
      </div>
    </section>`;
  }

  render() {
    return html`<div class="page">
      <map-backdrop class="backdrop"></map-backdrop>
      <div class="dialog" role="dialog" aria-labelledby="title">
        <header class="head">
          <h2 class="title" id="title">Settings</h2>
          <button class="close" type="button" aria-label="Close">
            <svg class="cross" viewBox="0 0 48 48" aria-hidden="true">
              <path d="M13.5 13.5L34.5 34.5M34.5 13.5L13.5 34.5" fill="none" stroke="#70757f" stroke-width="4" stroke-linecap="round" />
            </svg>
          </button>
        </header>
        <div class="body">
          <nav class="tabs">
            ${TABS.map(
              (t) => html`<button type="button" class=${classMap({ tab: true, active: this.tab === t })} @click=${() => (this.tab = t)}>${t}</button>`,
            )}
          </nav>
          <p class="lead">Please choose 4 map styles you would like to use for the solution, then click the checkbox.</p>
          <div class="notice">
            <svg class="warn" viewBox="0 0 32 32" aria-hidden="true">
              <defs>
                <linearGradient id="amber" x1="0" y1="0" x2="0" y2="1">
                  <stop offset="0" stop-color="#ffd84a" />
                  <stop offset="1" stop-color="#ffa04f" />
                </linearGradient>
              </defs>
              <path d="M16 6L29.5 29.5H2.5Z" fill="url(#amber)" stroke="url(#amber)" stroke-width="1.6" stroke-linejoin="round" />
              <path d="M2 29.9H30" stroke="#e8964a" stroke-width="1" />
              <path d="M14.2 12.6Q16 11 17.8 12.6L17 23.4H15Z" fill="#3d3f4a" />
              <circle cx="16" cy="26.6" r="1.8" fill="#3d3f4a" />
            </svg>
            <p class="notice-text"><span class="accent">Click on a map image</span> to select the map style that will be applied to the current view.</p>
          </div>
          ${this.group("Google map", GOOGLE)} ${this.group("Others", OTHERS)}
        </div>
        <footer class="foot">
          <button class="save" type="button">Save</button>
        </footer>
      </div>
    </div>`;
  }
}
